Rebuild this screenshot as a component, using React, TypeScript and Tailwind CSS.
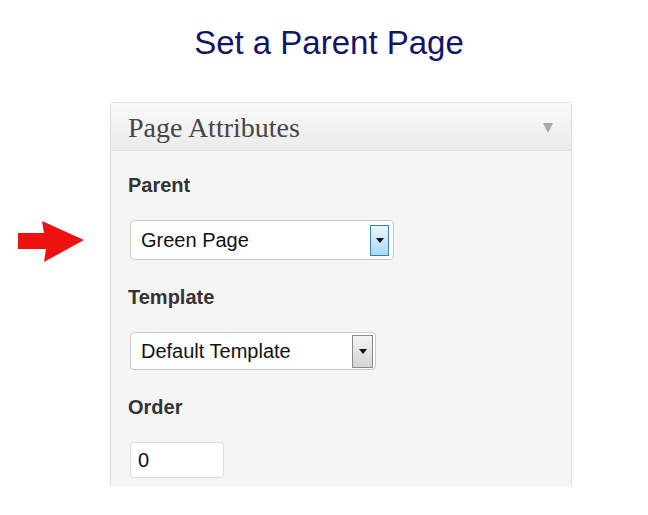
const SANS = { fontFamily: '"Liberation Sans", Arial, sans-serif' };

function Caret() {
  return (
    <svg width="8" height="5" viewBox="0 0 8 5">
      <polygon points="0,0 8,0 4,5" fill="#111" />
    </svg>
  );
}

function Select({ label, width, active }: { label: string; width: string; active?: boolean }) {
  return (
    <div
      className={`flex items-center justify-between rounded-[4px] border border-[#c9c9c9] bg-white pl-[10px] ${width} ${
        active ? 'h-[40px] pr-[4px]' : 'h-[38px] pr-[2px]'
      }`}
    >
      <span className="text-[20px] leading-none text-[#111]">{label}</span>
      <span
        className={`flex items-center justify-center border ${
          active
            ? 'h-[31px] w-[19px] border-[#3c7fb1] bg-gradient-to-b from-[#eaf6fd] to-[#a7d9f5]'
            : 'h-[33px] w-[21px] border-[#8a8a8a] bg-gradient-to-b from-[#f4f4f4] to-[#d4d4d4]'
        }`}
      >
        <Caret />
      </span>
    </div>
  );
}

export default function App() {
  return (
    <div className="w-[648px] h-[515px] bg-white" style={SANS}>
      {/* heading */}
      <h1 className="pt-[26px] pl-[10px] text-center text-[33px] leading-[33px] text-[#131368]">
        Set a Parent Page
      </h1>

      <div className="mt-[43px] flex">
        {/* pointer arrow */}
        <div className="w-[110px] pl-[18px] pt-[119px]">
          <svg width="66" height="41" viewBox="0 0 66 41">
            <polygon points="0,12 26,12 24,0 66,19 26,41 28,28 0,28" fill="#ee1111" />
          </svg>
        </div>

        {/* meta box */}
        <div className="w-[462px] h-[384px] rounded-t-[3px] border-x border-t border-[#dedede] bg-[#f5f5f5]">
          <div className="flex h-[48px] items-center justify-between border-b border-[#dcdcdc] bg-gradient-to-b from-[#fafafa] to-[#ebebeb] pl-[17px] pr-[18px] pt-[2px]">
            <span
              className="text-[28px] leading-[28px] text-[#464646]"
              style={{ fontFamily: '"Liberation Serif", Georgia, serif' }}
            >
              Page Attributes
            </span>
            <svg width="10" height="10" viewBox="0 0 10 10">
              <polygon points="0,0 10,0 5,10" fill="#a8a8a8" />
            </svg>
          </div>

          <div className="flex flex-col items-start pl-[17px] pt-[24px] text-[#333]">
            <p className="text-[20px] leading-[20px] font-bold">Parent</p>
            <div className="mt-[25px] ml-[2px]">
              <Select label="Green Page" width="w-[264px]" active />
            </div>

            <p className="mt-[27px] text-[20px] leading-[20px] font-bold">Template</p>
            <div className="mt-[25px] ml-[2px]">
              <Select label="Default Template" width="w-[246px]" />
            </div>

            <p className="mt-[27px] text-[20px] leading-[20px] font-bold">Order</p>
            <div className="mt-[25px] ml-[2px] flex h-[36px] w-[94px] items-center rounded-[4px] border border-[#dddddd] bg-white pl-[7px] text-[20px] text-[#111]">
              0
            </div>
          </div>
        </div>
      </div>
    </div>
  );
}
